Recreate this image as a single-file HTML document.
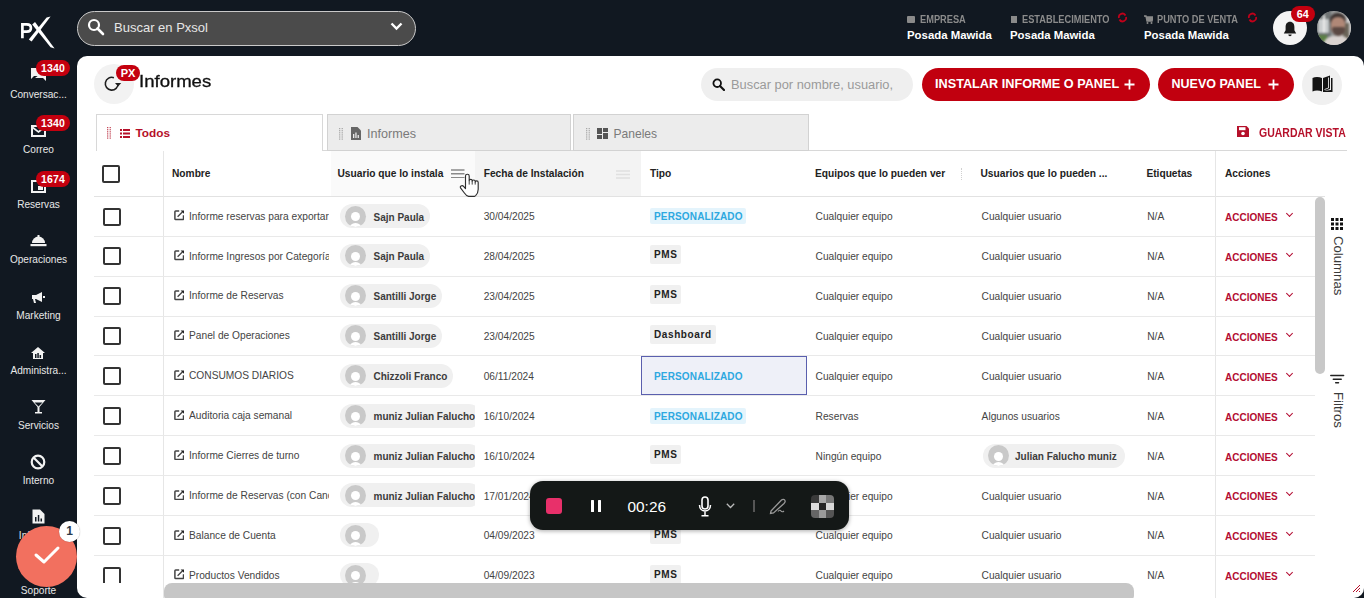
<!DOCTYPE html>
<html><head><meta charset="utf-8">
<style>
*{box-sizing:border-box;margin:0;padding:0}
html,body{width:1364px;height:598px;overflow:hidden}
body{background:#111821;font-family:"Liberation Sans",sans-serif;position:relative;color:#333}
.a{position:absolute}
.t{position:absolute;white-space:nowrap;line-height:1}
/* sidebar */
.sb-l{position:absolute;left:0;width:77px;text-align:center;color:#e8e8e8;font-size:10.1px;line-height:1}
.badge{position:absolute;left:36px;width:34px;height:16px;border-radius:8px;background:#c4000f;color:#fff;font-weight:bold;font-size:10.5px;line-height:16px;text-align:center;letter-spacing:0.2px}
/* panel */
#panel{position:absolute;left:77px;top:56px;width:1287px;height:542px;background:#fff;border-radius:10px;overflow:hidden}
.hdr{position:absolute;font-weight:bold;font-size:10.2px;color:#222;line-height:1;white-space:nowrap}
.row-b{position:absolute;left:17px;width:1221px;height:1px;background:#e9e9e9}
.cb{position:absolute;width:18px;height:18px;border:2px solid #333;border-radius:2px;background:#fff}
.cell{position:absolute;font-size:10.2px;color:#444;line-height:1;white-space:nowrap}
.chip{position:absolute;height:24px;border-radius:12px;background:#f0f0f0}
.av{position:absolute;left:5px;top:1.5px;width:21px;height:21px;border-radius:50%;background:#c9c9c9;overflow:hidden}
.av:before{content:"";position:absolute;left:6px;top:6.5px;width:9px;height:9px;border-radius:50%;background:#fff}
.av:after{content:"";position:absolute;left:4px;top:17px;width:13px;height:12px;border-radius:50%;background:#fff}
.cname{position:absolute;left:34px;top:7px;font-weight:bold;font-size:10px;color:#3c3c3c;line-height:1;white-space:nowrap;padding-top:1.5px}
.pers{position:absolute;left:573px;height:16px;width:96px;background:#e4f4fc;color:#2ea8e0;font-weight:bold;font-size:10px;line-height:17px;padding-left:4px;letter-spacing:0.15px;border-radius:2px;white-space:nowrap}
.pms{position:absolute;left:573px;height:19px;background:#f0f0f0;color:#222;font-weight:bold;font-size:10px;line-height:19.5px;padding:0 4px;letter-spacing:0.6px;white-space:nowrap;border-radius:2px}
.acc{position:absolute;left:1148px;color:#b30c32;font-weight:bold;font-size:10px;letter-spacing:0px;line-height:1;white-space:nowrap}
.chev{position:absolute;width:5px;height:5px;border-right:1.7px solid #b30c32;border-bottom:1.7px solid #b30c32;transform:rotate(45deg)}
</style></head><body>

<!-- ============ TOP BAR ============ -->
<svg class="a" style="left:14px;top:10px" width="50" height="44" viewBox="14 10 50 44">
  <path d="M22.4 38.2 V24.4 H26.8 C29.8 24.4 30.9 26.1 30.9 28 C30.9 29.9 29.8 31.6 26.8 31.6 H22.4" stroke="#fff" stroke-width="2.7" fill="none"/>
  <path d="M50.6 16.6 L46.6 17.4 L28.8 39.4 L31.6 41.4 Z" fill="#fff"/>
  <path d="M32.2 24.4 L35.0 22.0 L54.6 48.6 L50.6 47.2 Z" fill="#fff"/>
</svg>

<div class="a" style="left:77px;top:11px;width:339px;height:35px;border:1.2px solid #c9c9c9;border-radius:18px;background:#4b4b4b"></div>
<svg class="a" style="left:87px;top:18px" width="18" height="18" viewBox="0 0 18 18"><circle cx="7" cy="7" r="5" stroke="#fff" stroke-width="2.2" fill="none"/><path d="M10.5 10.5 L16 16" stroke="#fff" stroke-width="2.6" stroke-linecap="round"/></svg>
<div class="t" style="left:114px;top:21px;font-size:13px;color:#e6e6e6">Buscar en Pxsol</div>
<svg class="a" style="left:390px;top:22px" width="13" height="9" viewBox="0 0 13 9"><path d="M1.5 1.5 L6.5 6.5 L11.5 1.5" stroke="#fff" stroke-width="2.4" fill="none"/></svg>

<!-- context -->
<div class="a" style="left:907px;top:16px;width:8px;height:7px;background:#8a8a8a;border-radius:1px"></div>
<div class="t" style="left:920px;top:15.4px;font-size:10px;font-weight:bold;color:#8b8b8b;transform:scaleX(0.925);transform-origin:0 0">EMPRESA</div>
<div class="t" style="left:907px;top:30px;font-size:11.4px;font-weight:bold;color:#fff">Posada Mawida</div>

<div class="a" style="left:1011px;top:16px;width:6px;height:7px;background:#8a8a8a"></div>
<div class="t" style="left:1022px;top:15.4px;font-size:10px;font-weight:bold;color:#8b8b8b;transform:scaleX(0.925);transform-origin:0 0">ESTABLECIMIENTO</div>
<svg class="a" style="left:1117px;top:12px" width="11" height="11" viewBox="0 0 11 11"><path d="M2 6 A3.5 3.5 0 0 1 8.5 3.5 M9 5 A3.5 3.5 0 0 1 2.5 7.5" stroke="#c0001a" stroke-width="1.8" fill="none"/></svg>
<div class="t" style="left:1010px;top:30px;font-size:11.4px;font-weight:bold;color:#fff">Posada Mawida</div>

<svg class="a" style="left:1144px;top:15px" width="9" height="9" viewBox="0 0 9 9"><path d="M0 1 H2 L3 6 H8 L9 2 H2.5" stroke="#8a8a8a" stroke-width="1.4" fill="#8a8a8a"/><circle cx="3.5" cy="8" r="1" fill="#8a8a8a"/><circle cx="7.5" cy="8" r="1" fill="#8a8a8a"/></svg>
<div class="t" style="left:1157px;top:15.4px;font-size:10px;font-weight:bold;color:#8b8b8b;transform:scaleX(0.925);transform-origin:0 0">PUNTO DE VENTA</div>
<svg class="a" style="left:1247px;top:12px" width="11" height="11" viewBox="0 0 11 11"><path d="M2 6 A3.5 3.5 0 0 1 8.5 3.5 M9 5 A3.5 3.5 0 0 1 2.5 7.5" stroke="#c0001a" stroke-width="1.8" fill="none"/></svg>
<div class="t" style="left:1144px;top:30px;font-size:11.4px;font-weight:bold;color:#fff">Posada Mawida</div>

<!-- bell -->
<div class="a" style="left:1273px;top:11px;width:34px;height:34px;border-radius:50%;background:#f4f4f4"></div>
<svg class="a" style="left:1282px;top:19px" width="16" height="18" viewBox="0 0 16 18"><path d="M8 2.8 C5 2.8 3.6 5.2 3.6 8.2 V11.2 L1.8 14.6 H14.2 L12.4 11.2 V8.2 C12.4 5.2 11 2.8 8 2.8 Z" fill="#1a1a1a"/><path d="M6.3 15.6 A1.7 1.7 0 0 0 9.7 15.6 Z" fill="#1a1a1a"/></svg>
<div class="a" style="left:1291px;top:5.6px;width:23.5px;height:16px;border-radius:8px;background:#c4000f;color:#fff;font-weight:bold;font-size:10.8px;line-height:17.5px;text-align:center">64</div>
<!-- avatar -->
<div class="a" style="left:1317px;top:11px;width:34px;height:34px;border-radius:50%;overflow:hidden;background:#9a9c9c">
  <div class="a" style="left:-2px;top:-2px;width:38px;height:38px;filter:blur(1.2px)">
    <div class="a" style="left:0;top:0;width:16px;height:38px;background:#6f7475"></div>
    <div class="a" style="left:3px;top:10px;width:11px;height:14px;background:#c9cccd"></div>
    <div class="a" style="left:8px;top:6px;width:2px;height:18px;background:#eee"></div>
    <div class="a" style="left:25px;top:2px;width:13px;height:30px;background:#cfcfcf"></div>
    <div class="a" style="left:28px;top:14px;width:6px;height:16px;background:#6a6458"></div>
    <div class="a" style="left:0;top:26px;width:12px;height:12px;background:#5b7f45"></div>
    <div class="a" style="left:15px;top:4px;width:16px;height:10px;border-radius:7px 7px 2px 2px;background:#3b3230"></div>
    <div class="a" style="left:16px;top:8px;width:14px;height:18px;border-radius:6px 6px 7px 7px;background:#b08877"></div>
    <div class="a" style="left:16.5px;top:18px;width:13px;height:9px;border-radius:2px 2px 7px 7px;background:#5b4842"></div>
    <div class="a" style="left:8px;top:27px;width:28px;height:14px;border-radius:10px 10px 0 0;background:#d9d2cf"></div>
  </div>
</div>

<!-- ============ SIDEBAR ============ -->
<svg class="a" style="left:31px;top:67px" width="16" height="16" viewBox="0 0 16 16"><path d="M0 1 H10 V9 H3 L0 12 Z" fill="#f2f2f2"/><path d="M4 11 H12 L15 14 V5 H12" fill="#f2f2f2"/></svg>
<div class="badge" style="top:60px">1340</div>
<div class="sb-l" style="top:calc(88px + 1.8px)">Conversac...</div>

<svg class="a" style="left:31px;top:125px" width="15" height="12" viewBox="0 0 15 12"><rect x="1" y="1" width="13" height="10" fill="none" stroke="#f2f2f2" stroke-width="2"/><path d="M1 2 L7.5 7 L14 2" stroke="#f2f2f2" stroke-width="1.6" fill="none"/></svg>
<div class="badge" style="top:114.6px">1340</div>
<div class="sb-l" style="top:calc(143px + 1.8px)">Correo</div>

<svg class="a" style="left:31px;top:179px" width="15" height="14" viewBox="0 0 15 14"><rect x="1" y="2" width="13" height="11" fill="none" stroke="#f2f2f2" stroke-width="2"/><rect x="7" y="7" width="5" height="4" fill="#f2f2f2"/></svg>
<div class="badge" style="top:170.8px">1674</div>
<div class="sb-l" style="top:calc(198px + 1.8px)">Reservas</div>

<svg class="a" style="left:30px;top:234px" width="17" height="13" viewBox="0 0 17 13"><path d="M2 9 A6.5 6.5 0 0 1 15 9 Z" fill="#f2f2f2"/><rect x="0.5" y="10" width="16" height="2.2" fill="#f2f2f2"/><rect x="7.5" y="1" width="2" height="2" fill="#f2f2f2"/></svg>
<div class="sb-l" style="top:calc(253px + 1.8px)">Operaciones</div>

<svg class="a" style="left:31px;top:290.5px" width="15" height="13" viewBox="0 0 15 13"><path d="M1 4 H5 L11 1 V11 L5 8 H4 L5 12 H3 L2 8 H1 Z" fill="#f2f2f2"/><rect x="12" y="5" width="2" height="2" fill="#f2f2f2"/></svg>
<div class="sb-l" style="top:calc(309px + 1.8px)">Marketing</div>

<svg class="a" style="left:30px;top:345.5px" width="16" height="14" viewBox="0 0 16 14"><path d="M8 1 L15 7 H13 V13 H3 V7 H1 Z" fill="#f2f2f2"/><rect x="5" y="8" width="1.5" height="4" fill="#111821"/><rect x="7.3" y="7" width="1.5" height="5" fill="#111821"/><rect x="9.6" y="9" width="1.5" height="3" fill="#111821"/></svg>
<div class="sb-l" style="top:calc(364px + 1.8px)">Administra...</div>

<svg class="a" style="left:31px;top:399px" width="15" height="15" viewBox="0 0 15 15"><path d="M0.5 1 H14.5 L8.5 8 V13 H11 V14.5 H4 V13 H6.5 V8 Z" fill="#f2f2f2"/><path d="M3.5 3.5 H11.5 L7.5 7.5 Z" fill="#111821"/></svg>
<div class="sb-l" style="top:calc(419px + 1.8px)">Servicios</div>

<svg class="a" style="left:30px;top:454px" width="16" height="16" viewBox="0 0 16 16"><circle cx="8" cy="8" r="6.3" fill="none" stroke="#f2f2f2" stroke-width="2.2"/><path d="M3.5 3.5 L12.5 12.5" stroke="#f2f2f2" stroke-width="2.2"/></svg>
<div class="sb-l" style="top:calc(474px + 1.8px)">Interno</div>

<svg class="a" style="left:32px;top:509px" width="13" height="15" viewBox="0 0 13 15"><path d="M0.5 0.5 H8 L12.5 5 V14.5 H0.5 Z" fill="#f2f2f2"/><rect x="3" y="8" width="1.5" height="4.5" fill="#111821"/><rect x="5.8" y="6" width="1.5" height="6.5" fill="#111821"/><rect x="8.5" y="9.5" width="1.5" height="3" fill="#111821"/></svg>
<div class="sb-l" style="top:calc(529px + 1.8px)">Informes</div>
<div class="sb-l" style="top:calc(584px + 1.8px)">Soporte</div>

<!-- ============ PANEL ============ -->
<div id="panel">
<!--PANEL-START-->
<div class="a" style="left:16.75px;top:7.75px;width:40px;height:40px;border-radius:50%;background:#f2f2f2"></div>
<svg class="a" style="left:26px;top:19px" width="20" height="18" viewBox="26 19 20 18"><path d="M36.9 21.7 A6.4 6.4 0 1 0 41.1 27.4" stroke="#1e1e1e" stroke-width="1.6" fill="none"/><path d="M38.0 27.0 L44.2 27.0 L41.1 30.6 Z" fill="#1e1e1e"/></svg>
<div class="a" style="left:39px;top:9px;width:24px;height:16px;border-radius:8px;background:#c4000f;color:#fff;font-weight:bold;font-size:11px;line-height:16px;text-align:center">PX</div>
<div class="t" style="left:61.5px;top:18.2px;font-size:16px;color:#111;transform:scaleX(1.16);transform-origin:0 0;-webkit-text-stroke:0.3px #111">Informes</div>
<div class="a" style="left:624px;top:12px;width:212px;height:33px;border-radius:17px;background:#efefef"></div>
<svg class="a" style="left:635px;top:22px" width="13" height="13" viewBox="0 0 13 13"><circle cx="5.2" cy="5.2" r="3.8" stroke="#111" stroke-width="1.8" fill="none"/><path d="M8 8 L12 12" stroke="#111" stroke-width="2.2" stroke-linecap="round"/></svg>
<div class="t" style="left:654px;top:22.8px;font-size:12.85px;color:#9a9a9a">Buscar por nombre, usuario,</div>
<div class="a" style="left:845px;top:12px;width:228px;height:33px;border-radius:17px;background:#c1000f"></div>
<div class="t" style="left:858px;top:22.3px;font-size:12.7px;font-weight:bold;color:#fff">INSTALAR INFORME O PANEL</div>
<svg class="a" style="left:1047px;top:23px" width="11" height="11" viewBox="0 0 11 11"><path d="M5.5 0.5 V10.5 M0.5 5.5 H10.5" stroke="#fff" stroke-width="1.8"/></svg>
<div class="a" style="left:1081px;top:12px;width:136px;height:33px;border-radius:17px;background:#c1000f"></div>
<div class="t" style="left:1094.5px;top:22.3px;font-size:12.5px;font-weight:bold;color:#fff">NUEVO PANEL</div>
<svg class="a" style="left:1191px;top:23px" width="11" height="11" viewBox="0 0 11 11"><path d="M5.5 0.5 V10.5 M0.5 5.5 H10.5" stroke="#fff" stroke-width="1.8"/></svg>
<div class="a" style="left:1225px;top:9px;width:40px;height:40px;border-radius:50%;background:#f0f0f0"></div>
<svg class="a" style="left:1235px;top:19px" width="21" height="18" viewBox="0 0 21 18"><path d="M0.5 3 C3 1.5 7 1.5 10 3 V16.5 C7 15 3 15 0.5 16.5 Z" fill="#141414"/><path d="M11 3 L18 0.5 V14 L11 16.5 Z" fill="#141414"/><path d="M19 3 H20.5 V17 H11 V16 L19 15 Z" fill="#141414"/><path d="M16.5 2.5 V13 L12.5 14.5" stroke="#fff" stroke-width="0.8" fill="none"/></svg>
<div class="a" style="left:19px;top:58px;width:227px;height:37px;border:1px solid #d8d8d8;border-bottom:none;background:#fff"></div>
<div class="a" style="left:245px;top:94px;width:1025px;height:1px;background:#d8d8d8"></div>
<div class="a" style="left:250px;top:58px;width:244px;height:37px;border:1px solid #d2d2d2;background:#ececec"></div>
<div class="a" style="left:496px;top:58px;width:236px;height:37px;border:1px solid #d2d2d2;background:#ececec"></div>
<svg class="a" style="left:30px;top:71.3px" width="5" height="13" viewBox="0 0 5 13"><rect x="0.0" y="0.0" width="1.3" height="1.2" fill="#c44a5a"/><rect x="2.6" y="0.0" width="1.3" height="1.2" fill="#c44a5a"/><rect x="0.0" y="2.1" width="1.3" height="1.2" fill="#c44a5a"/><rect x="2.6" y="2.1" width="1.3" height="1.2" fill="#c44a5a"/><rect x="0.0" y="4.2" width="1.3" height="1.2" fill="#c44a5a"/><rect x="2.6" y="4.2" width="1.3" height="1.2" fill="#c44a5a"/><rect x="0.0" y="6.3" width="1.3" height="1.2" fill="#c44a5a"/><rect x="2.6" y="6.3" width="1.3" height="1.2" fill="#c44a5a"/><rect x="0.0" y="8.4" width="1.3" height="1.2" fill="#c44a5a"/><rect x="2.6" y="8.4" width="1.3" height="1.2" fill="#c44a5a"/><rect x="0.0" y="10.5" width="1.3" height="1.2" fill="#c44a5a"/><rect x="2.6" y="10.5" width="1.3" height="1.2" fill="#c44a5a"/></svg>
<svg class="a" style="left:43px;top:72.8px" width="10" height="9" viewBox="0 0 10 9"><rect x="0" y="0" width="2" height="2" fill="#b5102a"/><rect x="3" y="0" width="7" height="2" fill="#b5102a"/><rect x="0" y="3.5" width="2" height="2" fill="#b5102a"/><rect x="3" y="3.5" width="7" height="2" fill="#b5102a"/><rect x="0" y="7" width="2" height="2" fill="#b5102a"/><rect x="3" y="7" width="7" height="2" fill="#b5102a"/></svg>
<div class="t" style="left:58.5px;top:72px;font-size:11.8px;font-weight:bold;color:#b5102a">Todos</div>
<svg class="a" style="left:261.5px;top:71.5px" width="5" height="13" viewBox="0 0 5 13"><rect x="0.0" y="0.0" width="1.3" height="1.2" fill="#a8a8a8"/><rect x="2.6" y="0.0" width="1.3" height="1.2" fill="#a8a8a8"/><rect x="0.0" y="2.1" width="1.3" height="1.2" fill="#a8a8a8"/><rect x="2.6" y="2.1" width="1.3" height="1.2" fill="#a8a8a8"/><rect x="0.0" y="4.2" width="1.3" height="1.2" fill="#a8a8a8"/><rect x="2.6" y="4.2" width="1.3" height="1.2" fill="#a8a8a8"/><rect x="0.0" y="6.3" width="1.3" height="1.2" fill="#a8a8a8"/><rect x="2.6" y="6.3" width="1.3" height="1.2" fill="#a8a8a8"/><rect x="0.0" y="8.4" width="1.3" height="1.2" fill="#a8a8a8"/><rect x="2.6" y="8.4" width="1.3" height="1.2" fill="#a8a8a8"/><rect x="0.0" y="10.5" width="1.3" height="1.2" fill="#a8a8a8"/><rect x="2.6" y="10.5" width="1.3" height="1.2" fill="#a8a8a8"/></svg>
<svg class="a" style="left:274px;top:71px" width="10" height="13" viewBox="0 0 10 13"><path d="M0 0 H6.5 L10 3.5 V13 H0 Z" fill="#666"/><rect x="2" y="7" width="1.3" height="4" fill="#ececec"/><rect x="4.3" y="5.5" width="1.3" height="5.5" fill="#ececec"/><rect x="6.6" y="8" width="1.3" height="3" fill="#ececec"/></svg>
<div class="t" style="left:290px;top:72px;font-size:12.6px;color:#7a7a7a">Informes</div>
<svg class="a" style="left:508.5px;top:71.5px" width="5" height="13" viewBox="0 0 5 13"><rect x="0.0" y="0.0" width="1.3" height="1.2" fill="#a8a8a8"/><rect x="2.6" y="0.0" width="1.3" height="1.2" fill="#a8a8a8"/><rect x="0.0" y="2.1" width="1.3" height="1.2" fill="#a8a8a8"/><rect x="2.6" y="2.1" width="1.3" height="1.2" fill="#a8a8a8"/><rect x="0.0" y="4.2" width="1.3" height="1.2" fill="#a8a8a8"/><rect x="2.6" y="4.2" width="1.3" height="1.2" fill="#a8a8a8"/><rect x="0.0" y="6.3" width="1.3" height="1.2" fill="#a8a8a8"/><rect x="2.6" y="6.3" width="1.3" height="1.2" fill="#a8a8a8"/><rect x="0.0" y="8.4" width="1.3" height="1.2" fill="#a8a8a8"/><rect x="2.6" y="8.4" width="1.3" height="1.2" fill="#a8a8a8"/><rect x="0.0" y="10.5" width="1.3" height="1.2" fill="#a8a8a8"/><rect x="2.6" y="10.5" width="1.3" height="1.2" fill="#a8a8a8"/></svg>
<svg class="a" style="left:520px;top:72px" width="11" height="11" viewBox="0 0 11 11"><rect x="0" y="0" width="5" height="6" fill="#555"/><rect x="6" y="0" width="5" height="4" fill="#555"/><rect x="0" y="7" width="5" height="4" fill="#555"/><rect x="6" y="5" width="5" height="6" fill="#555"/></svg>
<div class="t" style="left:536.5px;top:72px;font-size:12.05px;color:#7a7a7a">Paneles</div>
<svg class="a" style="left:1159.5px;top:70px" width="12" height="11" viewBox="0 0 12 11"><path d="M0 0 H9.5 L12 2.5 V11 H0 Z" fill="#b5102a"/><rect x="2" y="1.2" width="6.5" height="3" fill="#fff"/><circle cx="6" cy="7.5" r="1.8" fill="#fff"/></svg>
<div class="t" style="left:1182px;top:70.5px;font-size:12px;font-weight:bold;color:#b5102a;transform:scaleX(0.875);transform-origin:0 0">GUARDAR VISTA</div>
<div class="a" style="left:254px;top:95px;width:144px;height:45px;background:#fafafa"></div>
<div class="a" style="left:398px;top:95px;width:166px;height:45px;background:#f3f3f3"></div>
<div class="a" style="left:17px;top:140px;width:1231px;height:1px;background:#e2e2e2"></div>
<div class="a" style="left:86px;top:95px;width:1px;height:447px;background:#e6e6e6"></div>
<div class="a" style="left:1138px;top:95px;width:1px;height:447px;background:#e6e6e6"></div>
<div class="cb" style="left:25px;top:108.5px"></div>
<div class="hdr" style="left:95px;top:113.1px">Nombre</div>
<div class="hdr" style="left:260.5px;top:113.1px">Usuario que lo instala</div>
<div class="hdr" style="left:406.7px;top:113.1px">Fecha de Instalación</div>
<div class="hdr" style="left:573px;top:113.1px">Tipo</div>
<div class="hdr" style="left:738px;top:113.1px">Equipos que lo pueden ver</div>
<div class="hdr" style="left:903.5px;top:113.1px">Usuarios que lo pueden ...</div>
<div class="hdr" style="left:1069.4px;top:113.1px">Etiquetas</div>
<div class="hdr" style="left:1148px;top:113.1px">Acciones</div>
<svg class="a" style="left:373.5px;top:113px" width="14" height="9" viewBox="0 0 14 9"><path d="M0 1 H13.5 M0 4.8 H13.5 M0 8.6 H13.5" stroke="#8a8a8a" stroke-width="1.4"/></svg>
<svg class="a" style="left:538.5px;top:113.5px" width="14" height="9" viewBox="0 0 14 9"><path d="M0 1 H14 M0 4.5 H14 M0 8 H14" stroke="#e0e0e0" stroke-width="1.3"/></svg>
<div class="a" style="left:883.5px;top:112px;width:1px;height:12px;border-left:1px dotted #d0d0d0"></div>
<div class="a" style="left:0;top:141px;width:1248px;height:386px;overflow:hidden">
<div class="cb" style="left:26px;top:10.5px"></div>
<svg class="a" style="left:96.7px;top:13.2px" width="10.5" height="10.5" viewBox="0 0 10.5 10.5"><path d="M5.2 0.9 H1.7 Q0.9 0.9 0.9 1.7 V8.7 Q0.9 9.5 1.7 9.5 H8.7 Q9.5 9.5 9.5 8.7 V5.2" stroke="#444" stroke-width="1.5" fill="none"/><path d="M3.6 6.8 L8.6 1.8" stroke="#444" stroke-width="1.3"/><path d="M6.6 0.4 H10.1 V3.9 Z" fill="#222"/></svg>
<div class="a" style="left:112px;top:14.6px;width:140px;overflow:hidden"><div class="cell" style="position:static">Informe reservas para exportar</div></div>
<div class="a" style="left:254px;top:7.0px;width:144px;height:24px;overflow:hidden">
<div class="chip" style="left:8.5px;top:0;padding-right:6px"><div class="av"></div><div class="cname" style="position:relative;left:0;top:0;padding-left:34px;line-height:24px">Sajn Paula</div></div>
</div>
<div class="cell" style="left:406.7px;top:15.1px">30/04/2025</div>
<div class="pers" style="top:11.0px">PERSONALIZADO</div>
<div class="cell" style="left:738.6px;top:15.1px">Cualquier equipo</div>
<div class="cell" style="left:904.6px;top:15.1px">Cualquier usuario</div>
<div class="cell" style="left:1070.2px;top:15.1px">N/A</div>
<div class="acc" style="top:16.0px">ACCIONES</div>
<div class="chev" style="left:1210px;top:14.0px"></div>
<div class="row-b" style="top:38.7px"></div>
<div class="cb" style="left:26px;top:50.42px"></div>
<svg class="a" style="left:96.7px;top:53.120000000000005px" width="10.5" height="10.5" viewBox="0 0 10.5 10.5"><path d="M5.2 0.9 H1.7 Q0.9 0.9 0.9 1.7 V8.7 Q0.9 9.5 1.7 9.5 H8.7 Q9.5 9.5 9.5 8.7 V5.2" stroke="#444" stroke-width="1.5" fill="none"/><path d="M3.6 6.8 L8.6 1.8" stroke="#444" stroke-width="1.3"/><path d="M6.6 0.4 H10.1 V3.9 Z" fill="#222"/></svg>
<div class="a" style="left:112px;top:54.5px;width:140px;overflow:hidden"><div class="cell" style="position:static">Informe Ingresos por Categoría</div></div>
<div class="a" style="left:254px;top:46.92px;width:144px;height:24px;overflow:hidden">
<div class="chip" style="left:8.5px;top:0;padding-right:6px"><div class="av"></div><div class="cname" style="position:relative;left:0;top:0;padding-left:34px;line-height:24px">Sajn Paula</div></div>
</div>
<div class="cell" style="left:406.7px;top:55.0px">28/04/2025</div>
<div class="pms" style="top:48.42px">PMS</div>
<div class="cell" style="left:738.6px;top:55.0px">Cualquier equipo</div>
<div class="cell" style="left:904.6px;top:55.0px">Cualquier usuario</div>
<div class="cell" style="left:1070.2px;top:55.0px">N/A</div>
<div class="acc" style="top:55.9px">ACCIONES</div>
<div class="chev" style="left:1210px;top:53.92px"></div>
<div class="row-b" style="top:78.63px"></div>
<div class="cb" style="left:26px;top:90.34px"></div>
<svg class="a" style="left:96.7px;top:93.04px" width="10.5" height="10.5" viewBox="0 0 10.5 10.5"><path d="M5.2 0.9 H1.7 Q0.9 0.9 0.9 1.7 V8.7 Q0.9 9.5 1.7 9.5 H8.7 Q9.5 9.5 9.5 8.7 V5.2" stroke="#444" stroke-width="1.5" fill="none"/><path d="M3.6 6.8 L8.6 1.8" stroke="#444" stroke-width="1.3"/><path d="M6.6 0.4 H10.1 V3.9 Z" fill="#222"/></svg>
<div class="a" style="left:112px;top:94.4px;width:140px;overflow:hidden"><div class="cell" style="position:static">Informe de Reservas</div></div>
<div class="a" style="left:254px;top:86.84px;width:144px;height:24px;overflow:hidden">
<div class="chip" style="left:8.5px;top:0;padding-right:6px"><div class="av"></div><div class="cname" style="position:relative;left:0;top:0;padding-left:34px;line-height:24px">Santilli Jorge</div></div>
</div>
<div class="cell" style="left:406.7px;top:94.9px">23/04/2025</div>
<div class="pms" style="top:88.34px">PMS</div>
<div class="cell" style="left:738.6px;top:94.9px">Cualquier equipo</div>
<div class="cell" style="left:904.6px;top:94.9px">Cualquier usuario</div>
<div class="cell" style="left:1070.2px;top:94.9px">N/A</div>
<div class="acc" style="top:95.8px">ACCIONES</div>
<div class="chev" style="left:1210px;top:93.84px"></div>
<div class="row-b" style="top:118.56px"></div>
<div class="cb" style="left:26px;top:130.26px"></div>
<svg class="a" style="left:96.7px;top:132.95999999999998px" width="10.5" height="10.5" viewBox="0 0 10.5 10.5"><path d="M5.2 0.9 H1.7 Q0.9 0.9 0.9 1.7 V8.7 Q0.9 9.5 1.7 9.5 H8.7 Q9.5 9.5 9.5 8.7 V5.2" stroke="#444" stroke-width="1.5" fill="none"/><path d="M3.6 6.8 L8.6 1.8" stroke="#444" stroke-width="1.3"/><path d="M6.6 0.4 H10.1 V3.9 Z" fill="#222"/></svg>
<div class="a" style="left:112px;top:134.3px;width:140px;overflow:hidden"><div class="cell" style="position:static">Panel de Operaciones</div></div>
<div class="a" style="left:254px;top:126.75999999999999px;width:144px;height:24px;overflow:hidden">
<div class="chip" style="left:8.5px;top:0;padding-right:6px"><div class="av"></div><div class="cname" style="position:relative;left:0;top:0;padding-left:34px;line-height:24px">Santilli Jorge</div></div>
</div>
<div class="cell" style="left:406.7px;top:134.8px">23/04/2025</div>
<div class="pms" style="top:128.26px">Dashboard</div>
<div class="cell" style="left:738.6px;top:134.8px">Cualquier equipo</div>
<div class="cell" style="left:904.6px;top:134.8px">Cualquier usuario</div>
<div class="cell" style="left:1070.2px;top:134.8px">N/A</div>
<div class="acc" style="top:135.7px">ACCIONES</div>
<div class="chev" style="left:1210px;top:133.76px"></div>
<div class="row-b" style="top:158.49px"></div>
<div class="cb" style="left:26px;top:170.18px"></div>
<svg class="a" style="left:96.7px;top:172.88px" width="10.5" height="10.5" viewBox="0 0 10.5 10.5"><path d="M5.2 0.9 H1.7 Q0.9 0.9 0.9 1.7 V8.7 Q0.9 9.5 1.7 9.5 H8.7 Q9.5 9.5 9.5 8.7 V5.2" stroke="#444" stroke-width="1.5" fill="none"/><path d="M3.6 6.8 L8.6 1.8" stroke="#444" stroke-width="1.3"/><path d="M6.6 0.4 H10.1 V3.9 Z" fill="#222"/></svg>
<div class="a" style="left:112px;top:174.3px;width:140px;overflow:hidden"><div class="cell" style="position:static">CONSUMOS DIARIOS</div></div>
<div class="a" style="left:254px;top:166.68px;width:144px;height:24px;overflow:hidden">
<div class="chip" style="left:8.5px;top:0;padding-right:6px"><div class="av"></div><div class="cname" style="position:relative;left:0;top:0;padding-left:34px;line-height:24px">Chizzoli Franco</div></div>
</div>
<div class="cell" style="left:406.7px;top:174.8px">06/11/2024</div>
<div class="a" style="left:564px;top:158.68px;width:166px;height:39px;border:1px solid #5a5fae;background:#eef0f8"></div>
<div class="pers" style="top:170.68px;background:transparent">PERSONALIZADO</div>
<div class="cell" style="left:738.6px;top:174.8px">Cualquier equipo</div>
<div class="cell" style="left:904.6px;top:174.8px">Cualquier usuario</div>
<div class="cell" style="left:1070.2px;top:174.8px">N/A</div>
<div class="acc" style="top:175.7px">ACCIONES</div>
<div class="chev" style="left:1210px;top:173.68px"></div>
<div class="row-b" style="top:198.42px"></div>
<div class="cb" style="left:26px;top:210.1px"></div>
<svg class="a" style="left:96.7px;top:212.79999999999998px" width="10.5" height="10.5" viewBox="0 0 10.5 10.5"><path d="M5.2 0.9 H1.7 Q0.9 0.9 0.9 1.7 V8.7 Q0.9 9.5 1.7 9.5 H8.7 Q9.5 9.5 9.5 8.7 V5.2" stroke="#444" stroke-width="1.5" fill="none"/><path d="M3.6 6.8 L8.6 1.8" stroke="#444" stroke-width="1.3"/><path d="M6.6 0.4 H10.1 V3.9 Z" fill="#222"/></svg>
<div class="a" style="left:112px;top:214.2px;width:140px;overflow:hidden"><div class="cell" style="position:static">Auditoria caja semanal</div></div>
<div class="a" style="left:254px;top:206.6px;width:144px;height:24px;overflow:hidden">
<div class="chip" style="left:8.5px;top:0;padding-right:6px"><div class="av"></div><div class="cname" style="position:relative;left:0;top:0;padding-left:34px;line-height:24px">muniz Julian Falucho</div></div>
</div>
<div class="cell" style="left:406.7px;top:214.7px">16/10/2024</div>
<div class="pers" style="top:210.6px">PERSONALIZADO</div>
<div class="cell" style="left:738.6px;top:214.7px">Reservas</div>
<div class="cell" style="left:904.6px;top:214.7px">Algunos usuarios</div>
<div class="cell" style="left:1070.2px;top:214.7px">N/A</div>
<div class="acc" style="top:215.6px">ACCIONES</div>
<div class="chev" style="left:1210px;top:213.6px"></div>
<div class="row-b" style="top:238.35px"></div>
<div class="cb" style="left:26px;top:250.01999999999998px"></div>
<svg class="a" style="left:96.7px;top:252.71999999999997px" width="10.5" height="10.5" viewBox="0 0 10.5 10.5"><path d="M5.2 0.9 H1.7 Q0.9 0.9 0.9 1.7 V8.7 Q0.9 9.5 1.7 9.5 H8.7 Q9.5 9.5 9.5 8.7 V5.2" stroke="#444" stroke-width="1.5" fill="none"/><path d="M3.6 6.8 L8.6 1.8" stroke="#444" stroke-width="1.3"/><path d="M6.6 0.4 H10.1 V3.9 Z" fill="#222"/></svg>
<div class="a" style="left:112px;top:254.1px;width:140px;overflow:hidden"><div class="cell" style="position:static">Informe Cierres de turno</div></div>
<div class="a" style="left:254px;top:246.51999999999998px;width:144px;height:24px;overflow:hidden">
<div class="chip" style="left:8.5px;top:0;padding-right:6px"><div class="av"></div><div class="cname" style="position:relative;left:0;top:0;padding-left:34px;line-height:24px">muniz Julian Falucho</div></div>
</div>
<div class="cell" style="left:406.7px;top:254.6px">16/10/2024</div>
<div class="pms" style="top:248.01999999999998px">PMS</div>
<div class="cell" style="left:738.6px;top:254.6px">Ningún equipo</div>
<div class="chip" style="left:906px;top:246.51999999999998px;padding-right:8px"><div class="av"></div><div class="cname" style="position:relative;left:0;top:0;padding-left:32px;line-height:24px">Julian Falucho muniz</div></div>
<div class="cell" style="left:1070.2px;top:254.6px">N/A</div>
<div class="acc" style="top:255.5px">ACCIONES</div>
<div class="chev" style="left:1210px;top:253.51999999999998px"></div>
<div class="row-b" style="top:278.28px"></div>
<div class="cb" style="left:26px;top:289.94px"></div>
<svg class="a" style="left:96.7px;top:292.64px" width="10.5" height="10.5" viewBox="0 0 10.5 10.5"><path d="M5.2 0.9 H1.7 Q0.9 0.9 0.9 1.7 V8.7 Q0.9 9.5 1.7 9.5 H8.7 Q9.5 9.5 9.5 8.7 V5.2" stroke="#444" stroke-width="1.5" fill="none"/><path d="M3.6 6.8 L8.6 1.8" stroke="#444" stroke-width="1.3"/><path d="M6.6 0.4 H10.1 V3.9 Z" fill="#222"/></svg>
<div class="a" style="left:112px;top:294.0px;width:140px;overflow:hidden"><div class="cell" style="position:static">Informe de Reservas (con Cancelaciones)</div></div>
<div class="a" style="left:254px;top:286.44px;width:144px;height:24px;overflow:hidden">
<div class="chip" style="left:8.5px;top:0;padding-right:6px"><div class="av"></div><div class="cname" style="position:relative;left:0;top:0;padding-left:34px;line-height:24px">muniz Julian Falucho</div></div>
</div>
<div class="cell" style="left:406.7px;top:294.5px">17/01/2024</div>
<div class="pms" style="top:287.94px">PMS</div>
<div class="cell" style="left:738.6px;top:294.5px">Cualquier equipo</div>
<div class="cell" style="left:904.6px;top:294.5px">Cualquier usuario</div>
<div class="cell" style="left:1070.2px;top:294.5px">N/A</div>
<div class="acc" style="top:295.4px">ACCIONES</div>
<div class="chev" style="left:1210px;top:293.44px"></div>
<div class="row-b" style="top:318.21px"></div>
<div class="cb" style="left:26px;top:329.86px"></div>
<svg class="a" style="left:96.7px;top:332.56px" width="10.5" height="10.5" viewBox="0 0 10.5 10.5"><path d="M5.2 0.9 H1.7 Q0.9 0.9 0.9 1.7 V8.7 Q0.9 9.5 1.7 9.5 H8.7 Q9.5 9.5 9.5 8.7 V5.2" stroke="#444" stroke-width="1.5" fill="none"/><path d="M3.6 6.8 L8.6 1.8" stroke="#444" stroke-width="1.3"/><path d="M6.6 0.4 H10.1 V3.9 Z" fill="#222"/></svg>
<div class="a" style="left:112px;top:333.9px;width:140px;overflow:hidden"><div class="cell" style="position:static">Balance de Cuenta</div></div>
<div class="a" style="left:254px;top:326.36px;width:144px;height:24px;overflow:hidden">
<div class="chip" style="left:8.5px;top:0;width:39px"><div class="av"></div></div>
</div>
<div class="cell" style="left:406.7px;top:334.4px">04/09/2023</div>
<div class="pms" style="top:327.86px">PMS</div>
<div class="cell" style="left:738.6px;top:334.4px">Cualquier equipo</div>
<div class="cell" style="left:904.6px;top:334.4px">Cualquier usuario</div>
<div class="cell" style="left:1070.2px;top:334.4px">N/A</div>
<div class="acc" style="top:335.3px">ACCIONES</div>
<div class="chev" style="left:1210px;top:333.36px"></div>
<div class="row-b" style="top:358.14px"></div>
<div class="cb" style="left:26px;top:369.78px"></div>
<svg class="a" style="left:96.7px;top:372.47999999999996px" width="10.5" height="10.5" viewBox="0 0 10.5 10.5"><path d="M5.2 0.9 H1.7 Q0.9 0.9 0.9 1.7 V8.7 Q0.9 9.5 1.7 9.5 H8.7 Q9.5 9.5 9.5 8.7 V5.2" stroke="#444" stroke-width="1.5" fill="none"/><path d="M3.6 6.8 L8.6 1.8" stroke="#444" stroke-width="1.3"/><path d="M6.6 0.4 H10.1 V3.9 Z" fill="#222"/></svg>
<div class="a" style="left:112px;top:373.9px;width:140px;overflow:hidden"><div class="cell" style="position:static">Productos Vendidos</div></div>
<div class="a" style="left:254px;top:366.28px;width:144px;height:24px;overflow:hidden">
<div class="chip" style="left:8.5px;top:0;width:39px"><div class="av"></div></div>
</div>
<div class="cell" style="left:406.7px;top:374.4px">04/09/2023</div>
<div class="pms" style="top:367.78px">PMS</div>
<div class="cell" style="left:738.6px;top:374.4px">Cualquier equipo</div>
<div class="cell" style="left:904.6px;top:374.4px">Cualquier usuario</div>
<div class="cell" style="left:1070.2px;top:374.4px">N/A</div>
<div class="acc" style="top:375.3px">ACCIONES</div>
<div class="chev" style="left:1210px;top:373.28px"></div>
<div class="row-b" style="top:398.07px"></div>
</div>
<div class="a" style="left:1238px;top:140.5px;width:10px;height:177px;border-radius:5px;background:#c8c8c8"></div>
<div class="a" style="left:87px;top:527px;width:970px;height:20px;border-radius:8px;background:#c6c6c6"></div>
<svg class="a" style="left:1254px;top:161.5px" width="12" height="12" viewBox="0 0 12 12"><rect x="0.0" y="0.0" width="3" height="3" fill="#111"/><rect x="4.5" y="0.0" width="3" height="3" fill="#111"/><rect x="9.0" y="0.0" width="3" height="3" fill="#111"/><rect x="0.0" y="4.5" width="3" height="3" fill="#111"/><rect x="4.5" y="4.5" width="3" height="3" fill="#111"/><rect x="9.0" y="4.5" width="3" height="3" fill="#111"/><rect x="0.0" y="9.0" width="3" height="3" fill="#111"/><rect x="4.5" y="9.0" width="3" height="3" fill="#111"/><rect x="9.0" y="9.0" width="3" height="3" fill="#111"/></svg>
<div class="t" style="left:1256px;top:180px;font-size:13.2px;color:#3a3a3a;transform:rotate(90deg) translate(0,-12px);transform-origin:0 0">Columnas</div>
<svg class="a" style="left:1252px;top:317px" width="16" height="12" viewBox="1252 317 16 12"><path d="M1253.8 319.5 H1266.6 M1256.3 323.2 H1264.2 M1258.7 326.7 H1261.5" stroke="#222" stroke-width="1.5" stroke-linecap="round"/></svg>
<div class="t" style="left:1256px;top:335.5px;font-size:13.2px;color:#3a3a3a;transform:rotate(90deg) translate(0,-12px);transform-origin:0 0">Filtros</div>
<svg class="a" style="left:1275px;top:528px" width="9" height="9" viewBox="0 0 9 9"><path d="M8 1 L1 8 M8 4 L4 8 M8 7 L7 8" stroke="#b5102a" stroke-width="1"/></svg>
<!--PANEL-END-->
</div>

<!-- hand cursor -->
<svg class="a" style="left:455px;top:170px" width="26" height="28" viewBox="455 170 26 28"><path d="M465.5 176 Q465.5 174.2 467.35 174.2 Q469.2 174.2 469.2 176 V180.6 Q469.2 179.3 470.7 179.3 Q472.2 179.3 472.2 180.6 V181.2 Q472.2 180 473.7 180 Q475.2 180 475.2 181.3 V182 Q475.2 180.9 476.7 180.9 Q478.2 180.9 478.2 182.4 V189.2 Q478.2 193 475.6 195.6 L474.6 196.4 H468.6 Q466.4 196 464.4 193 L460.7 188.2 Q459.7 186.6 461.1 185.9 Q462.6 185.2 463.8 186.6 L465.5 188.6 Z" fill="#fff" stroke="#2e2e2e" stroke-width="1.15" stroke-linejoin="round"/><path d="M469.2 180.6 V184.6 M472.2 181.2 V184.6 M475.2 182 V184.6" stroke="#2e2e2e" stroke-width="0.9"/></svg>

<!-- recording toolbar -->
<div class="a" style="left:530px;top:481px;width:319px;height:49px;border-radius:13px;background:#141817;box-shadow:0 0 0 1px rgba(255,255,255,0.06),0 1px 4px rgba(0,0,0,0.35)"></div>
<div class="a" style="left:546px;top:498px;width:16px;height:16px;border-radius:3px;background:#e8306a"></div>
<div class="a" style="left:590.5px;top:500px;width:3.6px;height:12.4px;background:#fff;border-radius:0.5px"></div>
<div class="a" style="left:597.5px;top:500px;width:3.6px;height:12.4px;background:#fff;border-radius:0.5px"></div>
<div class="t" style="left:627.5px;top:498.5px;font-size:15.4px;color:#fff">00:26</div>
<svg class="a" style="left:698px;top:496px" width="14" height="21" viewBox="0 0 14 21"><rect x="4" y="1" width="6" height="12" rx="3" fill="none" stroke="#fff" stroke-width="1.6"/><path d="M1.5 9 C1.5 17 12.5 17 12.5 9" stroke="#fff" stroke-width="1.5" fill="none"/><path d="M7 15.5 V19.5 M3.5 19.8 H10.5" stroke="#fff" stroke-width="1.5"/></svg>
<svg class="a" style="left:726px;top:503px" width="9" height="6" viewBox="0 0 9 6"><path d="M0.8 0.8 L4.5 4.5 L8.2 0.8" stroke="#bbb" stroke-width="1.3" fill="none"/></svg>
<div class="a" style="left:753px;top:500px;width:1.6px;height:12.4px;background:#555"></div>
<svg class="a" style="left:769px;top:497px" width="19" height="18" viewBox="0 0 19 18"><path d="M2 14 L12.5 3 C13.5 2 15.5 2 16 3.5 C16.5 4.5 16 5.5 15 6.5 L4.5 16 L1.5 16.5 Z" fill="none" stroke="#999" stroke-width="1.3"/><path d="M9 14.5 C10 13 11.5 13 12 14 C12.5 15 14 15 15 14" stroke="#999" stroke-width="1.1" fill="none"/></svg>
<div class="a" style="left:811px;top:495px;width:23px;height:23px;border-radius:4px;overflow:hidden">
  <div class="a" style="left:0.00px;top:0.00px;width:7.7px;height:7.7px;background:#3a3a3a"></div>
  <div class="a" style="left:7.67px;top:0.00px;width:7.7px;height:7.7px;background:#a8a8a8"></div>
  <div class="a" style="left:15.34px;top:0.00px;width:7.7px;height:7.7px;background:#777"></div>
  <div class="a" style="left:0.00px;top:7.67px;width:7.7px;height:7.7px;background:#dcdcdc"></div>
  <div class="a" style="left:7.67px;top:7.67px;width:7.7px;height:7.7px;background:#262626"></div>
  <div class="a" style="left:15.34px;top:7.67px;width:7.7px;height:7.7px;background:#d8d8d8"></div>
  <div class="a" style="left:0.00px;top:15.34px;width:7.7px;height:7.7px;background:#666"></div>
  <div class="a" style="left:7.67px;top:15.34px;width:7.7px;height:7.7px;background:#9a9a9a"></div>
  <div class="a" style="left:15.34px;top:15.34px;width:7.7px;height:7.7px;background:#555"></div>
</div>

<!-- FAB -->
<div class="a" style="left:16px;top:526px;width:61px;height:61px;border-radius:50%;background:#f2705f"></div>
<svg class="a" style="left:33px;top:545px" width="28" height="20" viewBox="0 0 28 20"><path d="M3 10 L11 17 L25 3" stroke="#fff" stroke-width="3" fill="none" stroke-linecap="round" stroke-linejoin="round"/></svg>
<div class="a" style="left:59px;top:521px;width:21px;height:21px;border-radius:50%;background:#fff;box-shadow:0 0 1px rgba(0,0,0,0.4);color:#2b3a4a;font-weight:bold;font-size:12px;line-height:21px;text-align:center">1</div>

</body></html>
